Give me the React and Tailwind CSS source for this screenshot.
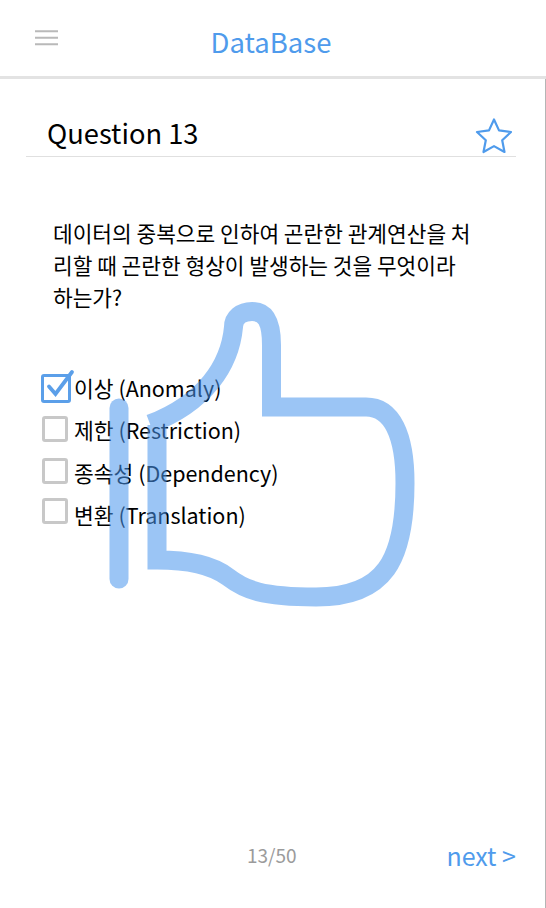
const FONT = '"Noto Sans CJK KR", "Noto Sans", sans-serif';

function Box({ checked, cls }) {
  if (checked) {
    return (
      <span className="relative block w-[30px] h-[29px] -ml-[2px] mr-[3px] shrink-0">
        <span className="block w-[30px] h-[29px] rounded-[3px] border-[3px] border-[#5b9fe9] bg-white" />
        <svg className="absolute left-0 top-[-5px]" width="34" height="32" viewBox="0 0 34 32" fill="none">
          <path d="M8 17.5L14.5 25L31 3" stroke="#5b9fe9" strokeWidth="3.8" strokeLinecap="round" strokeLinejoin="miter" />
        </svg>
      </span>
    );
  }
  return <span className={`block w-[26px] h-[26px] -ml-px mr-[6px] shrink-0 rounded-[3px] border-[3px] border-[#c8c8c8] bg-white ${cls}`} />;
}

const options = ['이상 (Anomaly)', '제한 (Restriction)', '종속성 (Dependency)', '변환 (Translation)'];
const offsets = ['', '-translate-y-px', '-translate-y-[2px]', '-translate-y-[4px]'];

export default function App() {
  return (
    <div className="relative w-[546px] h-[908px] bg-white text-black overflow-hidden flex flex-col" style={{ fontFamily: FONT }}>
      <header className="relative h-[79px] shrink-0 border-b-[3px] border-[#e3e3e3] flex justify-center">
        <svg className="absolute left-[35px] top-[30px]" width="23" height="16" viewBox="0 0 23 16">
          <path d="M0 1.2H23M0 7.7H23M0 14.2H23" stroke="#b9b9b9" strokeWidth="2" />
        </svg>
        <h1 className="mt-[21px] h-[40px] text-[27.5px] leading-[40px] font-normal text-[#4f9bec] -ml-[4px]">DataBase</h1>
      </header>

      <main className="flex-1 flex flex-col border-r border-[#b5b5b5]">
        <div className="mx-[26px] mt-[34px] h-[44px] w-[490px] border-b border-[#e0e0e0] flex items-start justify-between pl-[21px]">
          <h2 className="text-[27.3px] leading-[38px] font-normal">Question 13</h2>
          <svg className="mt-[4px] mr-[2px]" width="40" height="38" viewBox="0 0 40 38" fill="none">
            <path d="M20 2.5L25 13.4L37 15L28.2 23.2L30.5 35L20 29.1L9.5 35L11.8 23.2L3 15L15 13.4Z" stroke="#4f9bec" strokeWidth="2.2" strokeLinejoin="round" />
          </svg>
        </div>

        <p className="mt-[60px] ml-[53px] w-[425px] text-[21.4px] leading-[32px] break-all">
          데이터의 중복으로 인하여 곤란한 관계연산을 처리할 때 곤란한 형상이 발생하는 것을 무엇이라 하는가?
        </p>

        <ul className="mt-[54px] ml-[43px] flex flex-col">
          {options.map((o, i) => (
            <li key={o} className="flex items-center h-[42.3px]">
              <Box checked={i === 0} cls={offsets[i]} />
              <span className="text-[21.5px] leading-[30px] whitespace-nowrap">{o}</span>
            </li>
          ))}
        </ul>

        <footer className="mt-auto mb-[35px] h-[36px] flex items-center">
          <span className="ml-[247px] text-[19px] leading-[36px] text-[#9b9b9b]">13/50</span>
          <span className="ml-auto mr-[29px] text-[25px] leading-[36px] text-[#4f9bec]">next &gt;</span>
        </footer>
      </main>

      <svg className="absolute left-0 top-0 pointer-events-none opacity-55" width="546" height="908" viewBox="0 0 546 908" fill="none">
        <path d="M119 408V579" stroke="#4a96ee" strokeWidth="19" strokeLinecap="round" />
        <path
          d="M157 425V560C190 560 212 565 228 577C245 590 262 597 316 597C385 597 405 560 405 483C405 435 392 407 366 407H271.5V345C271.5 322 266 311.5 252 311.5C241 311.5 233.5 318 233.5 327C230 365 205 403 150 424"
          stroke="#4a96ee"
          strokeWidth="19"
          strokeLinejoin="miter"
        />
      </svg>
    </div>
  );
}
